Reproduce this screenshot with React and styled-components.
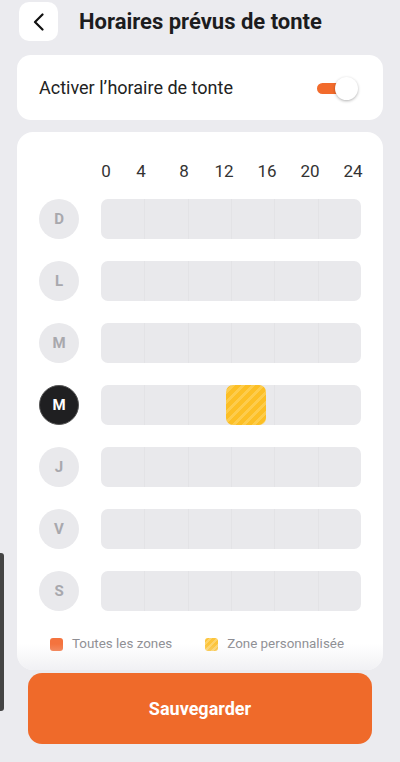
import React from 'react';
import styled, { createGlobalStyle } from 'styled-components';

const GlobalStyle = createGlobalStyle`
  html, body {
    margin: 0;
    padding: 0;
    background: #ebebef;
    font-family: Roboto, "Noto Sans", sans-serif;
  }
`;

const Page = styled.div`
  width: 400px;
  height: 762px;
  overflow: hidden;
  position: relative;
  background: #ebebef;
`;

const Header = styled.div`
  display: flex;
  align-items: center;
  gap: 21px;
  padding: 2px 0 0 19px;
  height: 39px;
`;

const BackButton = styled.div`
  width: 39px;
  height: 39px;
  border-radius: 10px;
  background: #fff;
  display: flex;
  align-items: center;
  justify-content: center;
`;

const Title = styled.h1`
  margin: 0;
  font-size: 22px;
  font-weight: 700;
  color: #1c1c1e;
`;

const SwitchCard = styled.div`
  margin: 14px 17px 0;
  height: 65px;
  background: #fff;
  border-radius: 14px;
  display: flex;
  align-items: center;
  justify-content: space-between;
  padding: 0 25px 0 22px;
  box-sizing: border-box;
`;

const SwitchLabel = styled.span`
  font-size: 18px;
  color: #222;
`;

const Toggle = styled.div`
  position: relative;
  width: 41px;
  height: 23px;
  margin-top: 2px;
`;

const Track = styled.div`
  position: absolute;
  left: 0;
  top: 6px;
  width: 24px;
  height: 11px;
  border-radius: 6px;
  background: #f26b2c;
`;

const Knob = styled.div`
  position: absolute;
  right: 0;
  top: 0;
  width: 23px;
  height: 23px;
  border-radius: 50%;
  background: #fff;
  box-shadow: 0 1px 3px rgba(0, 0, 0, 0.3);
`;

const ScheduleCard = styled.div`
  position: relative;
  margin: 12px 17px 0;
  height: 538px;
  box-sizing: border-box;
  background: #fff;
  border-radius: 16px;
  padding: 28px 22px 0;
  overflow: hidden;

  &::after {
    content: '';
    position: absolute;
    left: 0;
    right: 0;
    bottom: 0;
    height: 26px;
    background: linear-gradient(to bottom, rgba(235, 235, 239, 0), rgba(235, 235, 239, 0.7));
  }
`;

const Scale = styled.div`
  position: relative;
  margin-left: 62px;
  height: 22px;
`;

const Tick = styled.span`
  position: absolute;
  top: 0;
  transform: translateX(-50%);
  font-size: 17px;
  line-height: 22px;
  color: #333;
`;

const Rows = styled.div`
  margin-top: 17px;
  display: flex;
  flex-direction: column;
  gap: 22px;
`;

const Row = styled.div`
  display: flex;
  align-items: center;
  gap: 22px;
`;

const Day = styled.div`
  width: 40px;
  height: 40px;
  border-radius: 50%;
  box-sizing: border-box;
  display: flex;
  align-items: center;
  justify-content: center;
  font-size: 15px;
  font-weight: 700;
  background: ${({ $active }) => ($active ? '#1f1f21' : '#e9e9ec')};
  color: ${({ $active }) => ($active ? '#fff' : '#a8a8ad')};
  border: ${({ $active }) => ($active ? '1px solid #555' : 'none')};
`;

const Bar = styled.div`
  position: relative;
  width: 260px;
  height: 40px;
  border-radius: 7px;
  background: #e9e9ec;
  display: grid;
  grid-template-columns: repeat(6, 1fr);
  overflow: hidden;
`;

const Cell = styled.div`
  border-left: ${({ $first }) => ($first ? 'none' : '1px solid #e3e3e6')};
`;

const Slot = styled.div`
  position: absolute;
  top: 0;
  height: 40px;
  border-radius: 7px;
  background: repeating-linear-gradient(135deg, #fcbf25 0 4px, #fdcc4c 4px 7px);
`;

const Legend = styled.div`
  margin: 23px 0 0 11px;
  display: flex;
  align-items: center;
  gap: 33px;
`;

const LegendItem = styled.div`
  display: flex;
  align-items: center;
  gap: 9px;
  font-size: 13.4px;
  color: #8e8e93;
  line-height: 20px;
`;

const Swatch = styled.span`
  width: 13px;
  height: 13px;
  border-radius: 3px;
  background: ${({ $kind }) =>
    $kind === 'custom'
      ? 'repeating-linear-gradient(135deg, #fcc43a 0 3px, #fdd36a 3px 5px)'
      : '#f4733e'};
`;

const SaveButton = styled.button`
  display: block;
  margin: 3px 0 0 28px;
  width: 344px;
  height: 71px;
  border: none;
  border-radius: 14px;
  background: #ef6a2a;
  color: #fff;
  font-family: Roboto, "Noto Sans", sans-serif;
  font-size: 18px;
  font-weight: 700;
`;

const EdgeBar = styled.div`
  position: absolute;
  left: 0;
  top: 553px;
  width: 4px;
  height: 158px;
  background: #444;
  border-radius: 0 3px 3px 0;
`;

const ticks = [
  { label: '0', x: 5 },
  { label: '4', x: 40 },
  { label: '8', x: 83 },
  { label: '12', x: 123 },
  { label: '16', x: 166 },
  { label: '20', x: 209 },
  { label: '24', x: 252 },
];

const days = [
  { d: 'D' },
  { d: 'L' },
  { d: 'M' },
  { d: 'M', active: true, slot: { left: 125, width: 40 } },
  { d: 'J' },
  { d: 'V' },
  { d: 'S' },
];

const App = () => {
  return (
    <Page>
      <GlobalStyle />
      <Header>
        <BackButton>
          <svg width="11" height="18" viewBox="0 0 11 18">
            <polyline points="9.5,1.5 2,9 9.5,16.5" fill="none" stroke="#111" strokeWidth="2.2" strokeLinecap="round" strokeLinejoin="round" />
          </svg>
        </BackButton>
        <Title>Horaires prévus de tonte</Title>
      </Header>

      <SwitchCard>
        <SwitchLabel>Activer l’horaire de tonte</SwitchLabel>
        <Toggle>
          <Track />
          <Knob />
        </Toggle>
      </SwitchCard>

      <ScheduleCard>
        <Scale>
          {ticks.map((t) => (
            <Tick key={t.label} style={{ left: t.x }}>{t.label}</Tick>
          ))}
        </Scale>
        <Rows>
          {days.map((day, i) => (
            <Row key={i}>
              <Day $active={day.active}>{day.d}</Day>
              <Bar>
                {[0, 1, 2, 3, 4, 5].map((c) => (
                  <Cell key={c} $first={c === 0} />
                ))}
                {day.slot && <Slot style={{ left: day.slot.left, width: day.slot.width }} />}
              </Bar>
            </Row>
          ))}
        </Rows>
        <Legend>
          <LegendItem>
            <Swatch />
            Toutes les zones
          </LegendItem>
          <LegendItem>
            <Swatch $kind="custom" />
            Zone personnalisée
          </LegendItem>
        </Legend>
      </ScheduleCard>

      <SaveButton>Sauvegarder</SaveButton>
      <EdgeBar />
    </Page>
  );
};

export default App;
